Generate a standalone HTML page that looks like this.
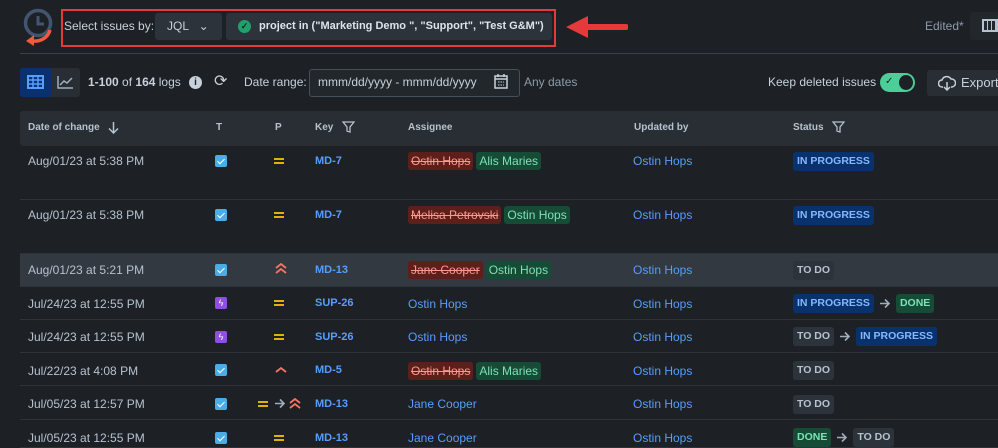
<!DOCTYPE html>
<html><head><meta charset="utf-8"><style>
*{box-sizing:border-box;margin:0;padding:0}
body{width:998px;height:448px;overflow:hidden;background:#1d2125;font-family:"Liberation Sans",sans-serif;color:#b6c2cf;font-size:12px;position:relative}
.a{position:absolute;white-space:nowrap}
.hdr{position:absolute;left:20px;top:111px;width:978px;height:35px;background:#282e33;border-radius:3px 0 0 3px}
.th{position:absolute;top:122px;font-weight:bold;font-size:10px;color:#b6c2cf}
.row{position:absolute;left:20px;width:978px;border-bottom:1px solid #2c333a}
.hl{background:#323940}
.chk{position:absolute;width:12px;height:12px;background:#4bade8;border-radius:2px}
.chk::after{content:"";position:absolute;left:4px;top:2px;width:3px;height:6px;border:solid #fff;border-width:0 1.5px 1.5px 0;transform:rotate(45deg)}
.bolt{position:absolute;width:12px;height:12px;background:#904ee2;border-radius:2px;color:#fff;font-size:9px;text-align:center;line-height:12px}
.eq{position:absolute;width:10px;height:6px;border-top:2px solid #e2b203;border-bottom:2px solid #e2b203}
.key{position:absolute;font-weight:bold;font-size:11px;color:#579dff}
.lnk{position:absolute;color:#579dff;font-size:12px}
.old{background:#5d1f1a;color:#fd9891;text-decoration:line-through;padding:2px 3px;border-radius:3px}
.new{background:#164b35;color:#7ee2b8;padding:2px 3px;border-radius:3px;margin-left:3px}
.sr{position:absolute;left:793px;display:flex;align-items:center;height:19px}
.st{display:block;font-weight:bold;font-size:10.5px;padding:0 4px;border-radius:3px;height:19px;line-height:19px}
.ip{background:#09326c;color:#85b8ff}
.td{background:#2c333a;color:#b6c2cf}
.dn{background:#164b35;color:#7ee2b8}
.arw{margin:0 5px;display:block}
</style></head><body>
<svg class="a" style="left:18px;top:6px" width="36" height="42" viewBox="0 0 36 42">
<circle cx="20" cy="17" r="12.5" fill="none" stroke="#44546f" stroke-width="3.5"/>
<path d="M20 10v8h6" fill="none" stroke="#44546f" stroke-width="3"/>
<path d="M32 24c-2 8-10 12-18 11" fill="none" stroke="#f15b3c" stroke-width="3.5"/>
<path d="M8 35l8-6v11z" fill="#f15b3c"/>
</svg>
<div class="a" style="left:61px;top:9px;width:495px;height:38px;border:2px solid #e5393b"></div>
<div class="a" style="left:64px;top:19px;font-size:12px;color:#c7d1db">Select issues by:</div>
<div class="a" style="left:155px;top:13px;width:67px;height:27px;background:#2c333a;border-radius:3px;padding:6px 0 0 12px;color:#c7d1db">JQL &nbsp;&nbsp;&#8964;</div>
<div class="a" style="left:226px;top:13px;width:326px;height:27px;background:#2c333a;border-radius:3px"></div>
<div class="a" style="left:238px;top:20px;width:13px;height:13px;border-radius:50%;background:#22a06b;color:#1d2125;font-size:9px;text-align:center;line-height:13px;font-weight:bold">✓</div>
<div class="a" style="left:259px;top:20px;color:#dee4ea;font-weight:bold;font-size:11px">project in ("Marketing Demo ", "Support", "Test G&amp;M")</div>
<svg class="a" style="left:564px;top:14px" width="64" height="26"><path d="M62 13H22" stroke="#e5393b" stroke-width="6" stroke-linecap="round"/><path d="M2 13L24 2V24z" fill="#e5393b"/></svg>
<div class="a" style="left:925px;top:19px;color:#8c9bab">Edited*</div>
<div class="a" style="left:970px;top:12px;width:30px;height:28px;background:#22272b;border-radius:3px"></div>
<div class="a" style="left:982px;top:19px;width:16px;height:13px;border:2px solid #b6c2cf;background:repeating-linear-gradient(90deg,transparent 0 3px,#b6c2cf 3px 4px)"></div>
<div class="a" style="left:20px;top:53px;width:978px;height:1px;background:#38414a"></div>
<div class="a" style="left:20px;top:68px;width:31px;height:29px;background:#09326c;border-radius:3px 0 0 3px"></div>
<div class="a" style="left:51px;top:68px;width:29px;height:29px;background:#282e33;border-radius:0 3px 3px 0"></div>
<svg class="a" style="left:27px;top:75px" width="17" height="14"><rect x="1" y="1" width="15" height="12" fill="none" stroke="#579dff" stroke-width="2"/><path d="M1 5h15M1 9h15M6 1v12M11 1v12" stroke="#579dff" stroke-width="1.5"/></svg>
<svg class="a" style="left:57px;top:75px" width="17" height="14"><path d="M1 1v12h15" fill="none" stroke="#9fadbc" stroke-width="1.5"/><path d="M3 10l4-4 3 2 5-5" fill="none" stroke="#9fadbc" stroke-width="1.5"/></svg>
<div class="a" style="left:88px;top:75px;color:#c7d1db"><b>1-100</b> of <b>164</b> logs</div>
<div class="a" style="left:189px;top:76px;width:13px;height:13px;border-radius:50%;background:#c7d1db;color:#1d2125;font-size:10px;font-weight:bold;text-align:center;line-height:13px">i</div>
<div class="a" style="left:214px;top:71px;color:#c7d1db;font-size:16px">⟳</div>
<div class="a" style="left:244px;top:75px;color:#c7d1db">Date range:</div>
<div class="a" style="left:309px;top:69px;width:211px;height:28px;border:1px solid #454f59;border-radius:3px;background:#22272b"></div>
<div class="a" style="left:318px;top:75px;color:#c7d1db;font-size:12px">mmm/dd/yyyy - mmm/dd/yyyy</div>
<svg class="a" style="left:494px;top:74px" width="14" height="15"><rect x="1" y="2" width="12" height="12" fill="none" stroke="#c7d1db" stroke-width="1.5"/><path d="M1 5h12M4 0v3M10 0v3" stroke="#c7d1db" stroke-width="1.5"/><path d="M4 8h6M4 11h6" stroke="#c7d1db" stroke-dasharray="1.5 1"/></svg>
<div class="a" style="left:524px;top:75px;color:#8c9bab">Any dates</div>
<div class="a" style="left:768px;top:75px;color:#c7d1db">Keep deleted issues</div>
<div class="a" style="left:880px;top:73px;width:35px;height:19px;border-radius:10px;background:#4bce97"></div>
<div class="a" style="left:899px;top:75px;width:14px;height:15px;border-radius:50%;background:#1d2125"></div>
<div class="a" style="left:885px;top:76px;font-size:10px;color:#1d2125">✓</div>
<div class="a" style="left:927px;top:70px;width:75px;height:26px;background:#282e33;border-radius:3px"></div>
<svg class="a" style="left:938px;top:75px" width="18" height="16"><path d="M5 12H4a3.5 3.5 0 010-7 5 5 0 019-1 3.5 3.5 0 011 8h-1" fill="none" stroke="#c7d1db" stroke-width="1.5"/><path d="M9 7v8M6 12l3 3 3-3" fill="none" stroke="#c7d1db" stroke-width="1.5"/></svg>
<div class="a" style="left:961px;top:75px;color:#c7d1db;font-size:13px">Export</div>
<div class="hdr"></div>
<div class="th" style="left:28px">Date of change</div>
<svg class="a" style="left:108px;top:121px" width="11" height="13"><path d="M5.5 1v11M1 7.5l4.5 4.5 4.5-4.5" fill="none" stroke="#b6c2cf" stroke-width="1.5"/></svg>
<div class="th" style="left:216px">T</div>
<div class="th" style="left:275px">P</div>
<div class="th" style="left:315px">Key</div>
<svg class="a" style="left:342px;top:121px" width="13" height="12"><path d="M1 1h11L8 6v5L5 10V6z" fill="none" stroke="#b6c2cf" stroke-width="1.3"/></svg>
<div class="th" style="left:408px">Assignee</div>
<div class="th" style="left:634px">Updated by</div>
<div class="th" style="left:793px">Status</div>
<svg class="a" style="left:832px;top:121px" width="13" height="12"><path d="M1 1h11L8 6v5L5 10V6z" fill="none" stroke="#b6c2cf" stroke-width="1.3"/></svg>
<div class="row" style="top:146px;height:54px"></div>
<div class="row" style="top:200px;height:54px"></div>
<div class="row hl" style="top:254px;height:33px"></div>
<div class="row" style="top:287px;height:33px"></div>
<div class="row" style="top:320px;height:33px"></div>
<div class="row" style="top:353px;height:33px"></div>
<div class="row" style="top:386px;height:34px"></div>
<div class="row" style="top:420px;height:28px"></div>

<div class="a" style="left:28px;top:154px">Aug/01/23 at 5:38 PM</div>
<div class="chk" style="left:215px;top:155px"></div><div class="eq" style="left:274px;top:158px"></div>
<div class="key" style="left:315px;top:155px">MD-7</div>
<div class="a" style="left:408px;top:154px"><span class="old">Ostin Hops</span><span class="new">Alis Maries</span></div>
<div class="lnk" style="left:633px;top:154px">Ostin Hops</div>
<div class="sr" style="top:152px"><span class="st ip">IN PROGRESS</span></div>

<div class="a" style="left:28px;top:208px">Aug/01/23 at 5:38 PM</div>
<div class="chk" style="left:215px;top:209px"></div><div class="eq" style="left:274px;top:212px"></div>
<div class="key" style="left:315px;top:209px">MD-7</div>
<div class="a" style="left:408px;top:208px"><span class="old">Melisa Petrovski</span><span class="new">Ostin Hops</span></div>
<div class="lnk" style="left:633px;top:208px">Ostin Hops</div>
<div class="sr" style="top:206px"><span class="st ip">IN PROGRESS</span></div>

<div class="a" style="left:28px;top:263px">Aug/01/23 at 5:21 PM</div>
<div class="chk" style="left:215px;top:264px"></div>
<svg class="a" style="left:275px;top:263px" width="12" height="12"><path d="M1 5l5-4 5 4M1 10l5-4 5 4" fill="none" stroke="#f87462" stroke-width="1.8"/></svg>
<div class="key" style="left:315px;top:264px">MD-13</div>
<div class="a" style="left:408px;top:263px"><span class="old">Jane Cooper</span><span class="new">Ostin Hops</span></div>
<div class="lnk" style="left:633px;top:263px">Ostin Hops</div>
<div class="sr" style="top:261px"><span class="st td">TO DO</span></div>

<div class="a" style="left:28px;top:297px">Jul/24/23 at 12:55 PM</div>
<div class="bolt" style="left:215px;top:297px">ϟ</div><div class="eq" style="left:274px;top:300px"></div>
<div class="key" style="left:315px;top:297px">SUP-26</div>
<div class="lnk" style="left:408px;top:297px">Ostin Hops</div>
<div class="lnk" style="left:633px;top:297px">Ostin Hops</div>
<div class="sr" style="top:294px"><span class="st ip">IN PROGRESS</span><svg class="arw" width="12" height="11"><path d="M1 5.5h9M6 1.5l4 4-4 4" fill="none" stroke="#9fadbc" stroke-width="1.6"/></svg><span class="st dn">DONE</span></div>

<div class="a" style="left:28px;top:330px">Jul/24/23 at 12:55 PM</div>
<div class="bolt" style="left:215px;top:331px">ϟ</div><div class="eq" style="left:274px;top:334px"></div>
<div class="key" style="left:315px;top:331px">SUP-26</div>
<div class="lnk" style="left:408px;top:330px">Ostin Hops</div>
<div class="lnk" style="left:633px;top:330px">Ostin Hops</div>
<div class="sr" style="top:327px"><span class="st td">TO DO</span><svg class="arw" width="12" height="11"><path d="M1 5.5h9M6 1.5l4 4-4 4" fill="none" stroke="#9fadbc" stroke-width="1.6"/></svg><span class="st ip">IN PROGRESS</span></div>

<div class="a" style="left:28px;top:364px">Jul/22/23 at 4:08 PM</div>
<div class="chk" style="left:215px;top:364px"></div>
<svg class="a" style="left:275px;top:366px" width="12" height="7"><path d="M1 6l5-4 5 4" fill="none" stroke="#f87462" stroke-width="1.8"/></svg>
<div class="key" style="left:315px;top:364px">MD-5</div>
<div class="a" style="left:408px;top:364px"><span class="old">Ostin Hops</span><span class="new">Alis Maries</span></div>
<div class="lnk" style="left:633px;top:364px">Ostin Hops</div>
<div class="sr" style="top:361px"><span class="st td">TO DO</span></div>

<div class="a" style="left:28px;top:397px">Jul/05/23 at 12:57 PM</div>
<div class="chk" style="left:215px;top:398px"></div>
<div class="eq" style="left:258px;top:401px"></div>
<svg class="a" style="left:274px;top:398px" width="12" height="11"><path d="M1 5.5h9M6 1.5l4 4-4 4" fill="none" stroke="#9fadbc" stroke-width="1.6"/></svg>
<svg class="a" style="left:289px;top:398px" width="12" height="12"><path d="M1 5l5-4 5 4M1 10l5-4 5 4" fill="none" stroke="#f87462" stroke-width="1.8"/></svg>
<div class="key" style="left:315px;top:398px">MD-13</div>
<div class="lnk" style="left:408px;top:397px">Jane Cooper</div>
<div class="lnk" style="left:633px;top:397px">Ostin Hops</div>
<div class="sr" style="top:395px"><span class="st td">TO DO</span></div>

<div class="a" style="left:28px;top:431px">Jul/05/23 at 12:55 PM</div>
<div class="chk" style="left:215px;top:432px"></div><div class="eq" style="left:274px;top:435px"></div>
<div class="key" style="left:315px;top:432px">MD-13</div>
<div class="lnk" style="left:408px;top:431px">Jane Cooper</div>
<div class="lnk" style="left:633px;top:431px">Ostin Hops</div>
<div class="sr" style="top:428px"><span class="st dn">DONE</span><svg class="arw" width="12" height="11"><path d="M1 5.5h9M6 1.5l4 4-4 4" fill="none" stroke="#9fadbc" stroke-width="1.6"/></svg><span class="st td">TO DO</span></div>
</body></html>
